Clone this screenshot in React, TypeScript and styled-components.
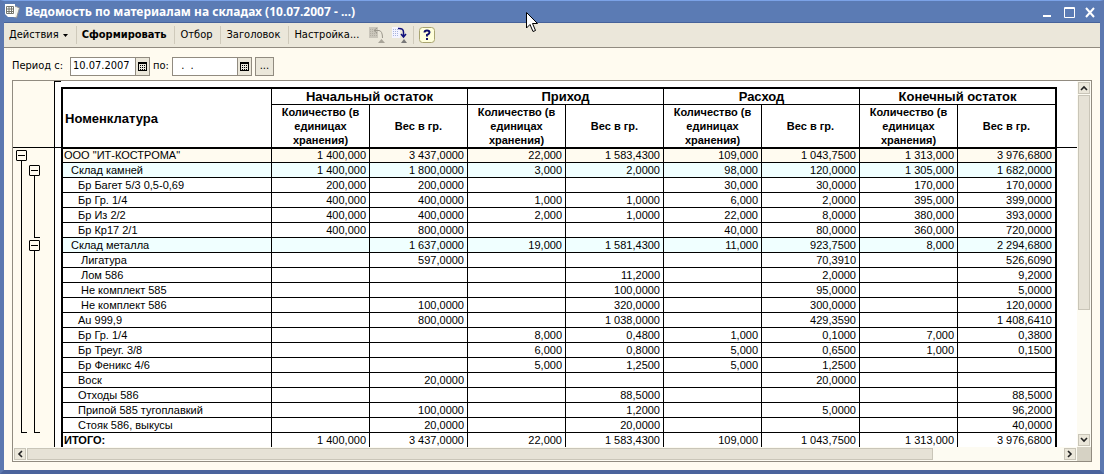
import React from 'react';
import styled, { createGlobalStyle, css } from 'styled-components';

const GlobalStyle = createGlobalStyle`
  * { box-sizing: border-box; }
  body { margin: 0; background: #fffbf0; }
`;

const Window = styled.div`
  display: flex;
  flex-direction: column;
  border: 4px solid #5c78b0;
  border-top: 1px solid #7ba2e7;
  border-bottom-color: #4a639c;
  background: #fffbf0;
  color: #000;
  font: 11px/14px "DejaVu Sans Condensed", "DejaVu Sans", sans-serif;
`;

const TitleBar = styled.header`
  display: flex;
  align-items: center;
  height: 22px;
  gap: 4px;
  background: #5b7bb4;
  border-bottom: 1px solid #46629a;
  color: #fff;
`;

const Title = styled.h1`
  flex: 1;
  margin: 0;
  font: bold 12px/16px "Noto Sans", "DejaVu Sans", sans-serif;
`;

const CaptionButton = styled.button`
  display: flex;
  padding: 0;
  margin-right: 3px;
  border: 0;
  background: none;
`;

const Cursor = styled.svg`
  position: absolute;
  left: 526px;
  top: 12px;
`;

const Toolbar = styled.nav`
  display: flex;
  align-items: center;
  height: 25px;
  background: #ebe7da;
  border-bottom: 1px solid #918b80;
`;

const ToolButton = styled.button<{ $strong?: boolean; $icon?: boolean }>`
  display: flex;
  align-items: center;
  gap: 4px;
  height: 24px;
  padding: ${(p) => (p.$icon ? '0 5px 0 2px' : '0 8px 0 5px')};
  border: 0;
  background: none;
  color: #000;
  font: 11px/14px "DejaVu Sans Condensed", "DejaVu Sans", sans-serif;
  font-weight: ${(p) => (p.$strong ? 'bold' : 'normal')};
`;

const Divider = styled.span`
  width: 1px;
  height: 18px;
  background: #cfcabb;
`;

const PeriodForm = styled.form`
  display: flex;
  align-items: center;
  gap: 3px;
  height: 32px;
  padding: 4px 8px 0;
`;

const PeriodLabel = styled.label<{ $leading?: boolean }>`
  min-width: ${(p) => (p.$leading ? 55 : 0)}px;
`;

const DateField = styled.div`
  display: flex;
  width: 80px;
  height: 19px;
  border: 1px solid #918b80;
  background: #fff;
`;

const DateInput = styled.input`
  flex: 1;
  min-width: 0;
  padding: 0 2px;
  border: 0;
  background: #fff;
  font: 11px/16px "DejaVu Sans Condensed", "DejaVu Sans", sans-serif;
  white-space: pre;
`;

const PickButton = styled.button`
  display: flex;
  align-items: center;
  justify-content: center;
  width: 14px;
  padding: 0;
  border: 0;
  border-left: 1px solid #918b80;
  background: #ebe7da;
`;

const MoreButton = styled.button`
  width: 19px;
  height: 19px;
  padding: 0;
  border: 1px solid #918b80;
  background: #ebe7da;
  font: 11px/12px "DejaVu Sans Condensed", "DejaVu Sans", sans-serif;
`;

const Panel = styled.main`
  display: grid;
  grid-template-columns: 1fr 14px;
  margin: 0 8px 8px;
  border: 1px solid #918b80;
`;

const Sheet = styled.div`
  display: grid;
  grid-template-columns: 41px 7px 1fr 20px;
  grid-template-rows: 67px 1fr;
  background: #fff;
`;

const FrozenEdge = styled.div<{ $gutter?: boolean; $ruled?: boolean }>`
  border-bottom: 1px solid #000;
  ${(p) => p.$gutter && css`background: #fffbf0;`}
  ${(p) => p.$ruled && css`border-top: 1px solid #000; border-left: 1px solid #000;`}
`;

const Rule = styled.div`
  grid-column: 2;
  grid-row: 2;
  border-left: 1px solid #000;
`;

const Outline = styled.div`
  grid-column: 1;
  grid-row: 2;
  display: grid;
  grid-template-columns: 11px 11px;
  grid-auto-rows: 15px;
  column-gap: 2px;
  padding-left: 3px;
  background: #fffbf0;
`;

const Bracket = styled.div<{ $level: number; $from: number; $to: number }>`
  grid-column: ${(p) => p.$level};
  grid-row: ${(p) => p.$from} / ${(p) => p.$to + 1};
  display: flex;
  flex-direction: column;
  padding-top: 2px;

  &::after {
    content: '';
    flex: 1;
    width: 5px;
    margin-left: 5px;
    border-left: 1px solid #000;
    border-bottom: 1px solid #000;
  }
`;

const FoldButton = styled.button`
  display: flex;
  align-items: center;
  width: 11px;
  height: 11px;
  padding: 0 1px;
  border: 1px solid #000;
  border-radius: 1px;
  background: #fffbf0;

  &::before {
    content: '';
    flex: 1;
    height: 1px;
    background: #000;
  }
`;

const TableHolder = styled.div`
  grid-column: 3;
  grid-row: 1 / 3;
  padding-top: 6px;
`;

const Table = styled.table`
  width: 100%;
  table-layout: fixed;
  border-collapse: separate;
  border-spacing: 0;
  border: 2px solid #000;
  border-right-width: 1px;
  border-bottom: 0;
  font: 11px/13px "Liberation Sans", Arial, sans-serif;
`;

const NameCol = styled.col`
  width: 209px;
`;

const Head = styled.th<{ $kind: 'name' | 'group' | 'measure' }>`
  padding: 0 2px;
  border-right: 1px solid #000;
  border-bottom: 1px solid #000;
  text-align: ${(p) => (p.$kind === 'name' ? 'left' : 'center')};
  font-size: ${(p) => (p.$kind === 'measure' ? 11 : 13)}px;
  line-height: ${(p) => (p.$kind === 'measure' ? 14 : 15)}px;
  height: ${(p) => (p.$kind === 'group' ? 16 : 43)}px;
`;

type Tone = 'plain' | 'firm' | 'store' | 'total';

const tones: Record<Tone, string> = {
  plain: '#fff',
  firm: '#fffbf0',
  store: '#f0ffff',
  total: '#fff',
};

const Row = styled.tr<{ $tone: Tone }>`
  height: ${(p) => (p.$tone === 'total' ? 14 : 15)}px;

  > * {
    background: ${(p) => tones[p.$tone]};
    border-top: ${(p) => (p.$tone === 'firm' ? '1px solid #000' : '0')};
    border-right: 1px solid #000;
    border-bottom: ${(p) => (p.$tone === 'total' ? '0' : '1px solid #000')};
    font-weight: normal;
  }

  > th {
    font-weight: ${(p) => (p.$tone === 'total' ? 'bold' : 'normal')};
  }
`;

const NameCell = styled.th<{ $indent: number }>`
  padding: 0 0 0 ${(p) => p.$indent}px;
  text-align: left;
  white-space: nowrap;
`;

const NumberCell = styled.td`
  padding: 0 3px 0 0;
  text-align: right;
  white-space: nowrap;
`;

const ScrollBar = styled.div<{ $vertical?: boolean }>`
  display: flex;
  flex-direction: ${(p) => (p.$vertical ? 'column' : 'row')};
  gap: 1px;
  padding: 1px;
  ${(p) => (p.$vertical ? 'width: 14px;' : 'height: 14px;')}
  background: #fdfbf2;
`;

const ScrollButton = styled.button`
  display: flex;
  align-items: center;
  justify-content: center;
  flex: none;
  width: 12px;
  height: 12px;
  padding: 0;
  border: 1px solid #c9c5b8;
  background: #ebe7da;
`;

const Thumb = styled.div<{ $share: number }>`
  flex: ${(p) => p.$share};
  border: 1px solid #c9c5b8;
  background: #e6e2d6;
`;

const Track = styled.div<{ $share: number }>`
  flex: ${(p) => p.$share};
`;

const Corner = styled.div`
  background: #d6d2c4;
`;

const CalendarIcon = () => (
  <svg width="9" height="9" viewBox="0 0 9 9" shapeRendering="crispEdges">
    <path d="M0 0H9V9H0Z" fill="#000" />
    <path d="M1 2H8V8H1Z" fill="#e8e6dc" />
    <path d="M2 3h1v1h-1zM4 3h1v1h-1zM6 3h1v1h-1zM2 5h1v1h-1zM4 5h1v1h-1zM6 5h1v1h-1zM2 7h1v1h-1zM4 7h1v1h-1zM6 7h1v1h-1z" fill="#000" />
  </svg>
);

const Chevron = ({ d }: { d: string }) => (
  <svg width="8" height="8" viewBox="0 0 8 8">
    <path d={d} fill="none" stroke="#222" strokeWidth="1.6" />
  </svg>
);

type Line = { name: string; indent: number; tone?: Tone; v: string[] };

const lines: Line[] = [
  { name: 'ООО "ИТ-КОСТРОМА"', indent: 1, tone: 'firm', v: ['1 400,000', '3 437,0000', '22,000', '1 583,4300', '109,000', '1 043,7500', '1 313,000', '3 976,6800'] },
  { name: 'Склад камней', indent: 8, tone: 'store', v: ['1 400,000', '1 800,0000', '3,000', '2,0000', '98,000', '120,0000', '1 305,000', '1 682,0000'] },
  { name: 'Бр Багет 5/3 0,5-0,69', indent: 15, v: ['200,000', '200,0000', '', '', '30,000', '30,0000', '170,000', '170,0000'] },
  { name: 'Бр Гр. 1/4', indent: 15, v: ['400,000', '400,0000', '1,000', '1,0000', '6,000', '2,0000', '395,000', '399,0000'] },
  { name: 'Бр Из 2/2', indent: 15, v: ['400,000', '400,0000', '2,000', '1,0000', '22,000', '8,0000', '380,000', '393,0000'] },
  { name: 'Бр Кр17 2/1', indent: 15, v: ['400,000', '800,0000', '', '', '40,000', '80,0000', '360,000', '720,0000'] },
  { name: 'Склад металла', indent: 8, tone: 'store', v: ['', '1 637,0000', '19,000', '1 581,4300', '11,000', '923,7500', '8,000', '2 294,6800'] },
  { name: 'Лигатура', indent: 18, v: ['', '597,0000', '', '', '', '70,3910', '', '526,6090'] },
  { name: 'Лом 586', indent: 18, v: ['', '', '', '11,2000', '', '2,0000', '', '9,2000'] },
  { name: 'Не комплект 585', indent: 18, v: ['', '', '', '100,0000', '', '95,0000', '', '5,0000'] },
  { name: 'Не комплект 586', indent: 18, v: ['', '100,0000', '', '320,0000', '', '300,0000', '', '120,0000'] },
  { name: 'Au 999,9', indent: 15, v: ['', '800,0000', '', '1 038,0000', '', '429,3590', '', '1 408,6410'] },
  { name: 'Бр Гр. 1/4', indent: 15, v: ['', '', '8,000', '0,4800', '1,000', '0,1000', '7,000', '0,3800'] },
  { name: 'Бр Треуг. 3/8', indent: 15, v: ['', '', '6,000', '0,8000', '5,000', '0,6500', '1,000', '0,1500'] },
  { name: 'Бр Феникс 4/6', indent: 15, v: ['', '', '5,000', '1,2500', '5,000', '1,2500', '', ''] },
  { name: 'Воск', indent: 15, v: ['', '20,0000', '', '', '', '20,0000', '', ''] },
  { name: 'Отходы 586', indent: 15, v: ['', '', '', '88,5000', '', '', '', '88,5000'] },
  { name: 'Припой 585 тугоплавкий', indent: 15, v: ['', '100,0000', '', '1,2000', '', '5,0000', '', '96,2000'] },
  { name: 'Стояк 586, выкусы', indent: 15, v: ['', '20,0000', '', '20,0000', '', '', '', '40,0000'] },
  { name: 'ИТОГО:', indent: 1, tone: 'total', v: ['1 400,000', '3 437,0000', '22,000', '1 583,4300', '109,000', '1 043,7500', '1 313,000', '3 976,6800'] },
];

const groups = ['Начальный остаток', 'Приход', 'Расход', 'Конечный остаток'];

const brackets = [
  { level: 1, from: 1, to: 19, name: 'ООО "ИТ-КОСТРОМА"' },
  { level: 2, from: 2, to: 6, name: 'Склад камней' },
  { level: 2, from: 7, to: 19, name: 'Склад металла' },
];

export default function App() {
  return (
    <Window>
      <GlobalStyle />
      <TitleBar>
        <svg width="17" height="17" viewBox="0 0 17 17">
          <path d="M11 3L15.500 5L12.500 15L8 13Z" fill="#f4f4ee" stroke="#8d9098" />
          <path d="M1 1H11V14H4L1 11Z" fill="#fff" />
          <path d="M2.500 3.500H9.500V10.500H2.500ZM2.500 6H9.500M2.500 8.500H9.500M5 3.500V10.500M7.500 3.500V10.500" fill="none" stroke="#77776e" />
        </svg>
        <Title>Ведомость по материалам на складах (10.07.2007 - ...)</Title>
        <CaptionButton aria-label="Свернуть">
          <svg width="14" height="14"><path d="M2 11H10" stroke="#fff" strokeWidth="2" /></svg>
        </CaptionButton>
        <CaptionButton aria-label="Развернуть">
          <svg width="14" height="14"><path d="M2.500 2.500H12.500V12.500H2.500ZM2.500 3.500H12.500" fill="none" stroke="#fff" /></svg>
        </CaptionButton>
        <CaptionButton aria-label="Закрыть">
          <svg width="14" height="14"><path d="M3 3L11 12M11 3L3 12" stroke="#fff" strokeWidth="2" /></svg>
        </CaptionButton>
      </TitleBar>
      <Toolbar>
        <ToolButton>
          Действия
          <svg width="5" height="3"><path d="M0 0H5L2.500 3Z" /></svg>
        </ToolButton>
        <Divider />
        <ToolButton $strong>Сформировать</ToolButton>
        <Divider />
        <ToolButton>Отбор</ToolButton>
        <Divider />
        <ToolButton>Заголовок</ToolButton>
        <Divider />
        <ToolButton>Настройка...</ToolButton>
        <ToolButton $icon aria-label="Назад">
          <svg width="16" height="17" viewBox="0 0 16 17">
            <path d="M0 0H9V11H0Z" fill="#c9c5ba" />
            <path d="M1 2.500H4M1 4.500H4M1 6.500H8M1 8.500H8" stroke="#b1ada2" strokeDasharray="1 1" />
            <path d="M5 3.500H10Q13.500 4 13.500 11M8 1L5 3.500L8 6" fill="none" stroke="#9b978c" />
            <path d="M9 16L12.500 12L16 16Z" fill="#a8a499" />
          </svg>
        </ToolButton>
        <ToolButton $icon aria-label="Вперёд">
          <svg width="16" height="17" viewBox="0 0 16 17">
            <path d="M0 0H8V11H0Z" fill="#f4f4ff" />
            <path d="M1 2.500H7M1 4.500H7M1 6.500H7M1 8.500H7" stroke="#a8b4dc" strokeDasharray="1 1" />
            <path d="M6 1.500Q11.500 1 11.500 5V10M9 7L11.500 10L14 7" fill="none" stroke="#10107c" strokeWidth="1.500" />
            <path d="M9 16L12 12L15 16Z" fill="#777" />
          </svg>
        </ToolButton>
        <Divider />
        <ToolButton aria-label="Справка">
          <svg width="16" height="16" viewBox="0 0 16 16">
            <rect x=".5" y=".5" width="15" height="15" rx="3" fill="#ffffdc" stroke="#a8a470" />
            <path d="M5.500 5.500Q5.500 3.500 8 3.500Q10.500 3.500 10.500 5.500Q10.500 6.800 8 8V9.500M8 11V13" fill="none" stroke="#10106c" strokeWidth="2" />
          </svg>
        </ToolButton>
      </Toolbar>
      <PeriodForm>
        <PeriodLabel $leading htmlFor="from">Период с:</PeriodLabel>
        <DateField>
          <DateInput id="from" defaultValue="10.07.2007" />
          <PickButton type="button" aria-label="Выбрать начало"><CalendarIcon /></PickButton>
        </DateField>
        <PeriodLabel htmlFor="to">по:</PeriodLabel>
        <DateField>
          <DateInput id="to" defaultValue="  .  ." />
          <PickButton type="button" aria-label="Выбрать конец"><CalendarIcon /></PickButton>
        </DateField>
        <MoreButton type="button">...</MoreButton>
      </PeriodForm>
      <Panel>
        <Sheet>
          <FrozenEdge $gutter />
          <FrozenEdge $ruled />
          <TableHolder>
            <Table>
              <colgroup>
                <NameCol />
                {lines[0].v.map((_, i) => <col key={i} />)}
              </colgroup>
              <thead>
                <tr>
                  <Head $kind="name" rowSpan={2} scope="col">Номенклатура</Head>
                  {groups.map((g) => <Head key={g} $kind="group" colSpan={2} scope="colgroup">{g}</Head>)}
                </tr>
                <tr>
                  {groups.map((g) => (
                    <React.Fragment key={g}>
                      <Head $kind="measure" scope="col">Количество (в единицах хранения)</Head>
                      <Head $kind="measure" scope="col">Вес в гр.</Head>
                    </React.Fragment>
                  ))}
                </tr>
              </thead>
              <tbody>
                {lines.map((l, r) => (
                  <Row key={r} $tone={l.tone ?? 'plain'}>
                    <NameCell $indent={l.indent} scope="row">{l.name}</NameCell>
                    {l.v.map((n, i) => <NumberCell key={i}>{n}</NumberCell>)}
                  </Row>
                ))}
              </tbody>
            </Table>
          </TableHolder>
          <FrozenEdge />
          <Outline>
            {brackets.map((b) => (
              <Bracket key={b.from} $level={b.level} $from={b.from} $to={b.to}>
                <FoldButton aria-label={`Свернуть ${b.name}`} />
              </Bracket>
            ))}
          </Outline>
          <Rule />
        </Sheet>
        <ScrollBar $vertical>
          <ScrollButton aria-label="Вверх"><Chevron d="M1 6L4 3L7 6" /></ScrollButton>
          <Thumb $share={7} />
          <Track $share={4} />
          <ScrollButton aria-label="Вниз"><Chevron d="M1 2L4 5L7 2" /></ScrollButton>
        </ScrollBar>
        <ScrollBar>
          <ScrollButton aria-label="Влево"><Chevron d="M6 1L3 4L6 7" /></ScrollButton>
          <Thumb $share={7} />
          <Track $share={1} />
          <ScrollButton aria-label="Вправо"><Chevron d="M2 1L5 4L2 7" /></ScrollButton>
        </ScrollBar>
        <Corner />
      </Panel>
      <Cursor width="13" height="21" viewBox="0 0 13 21">
        <path d="M.5 .5V16L4 12.500L7 19.500L9.500 18.500L6.500 11.500H11.500Z" fill="#fff" stroke="#000" />
      </Cursor>
    </Window>
  );
}
